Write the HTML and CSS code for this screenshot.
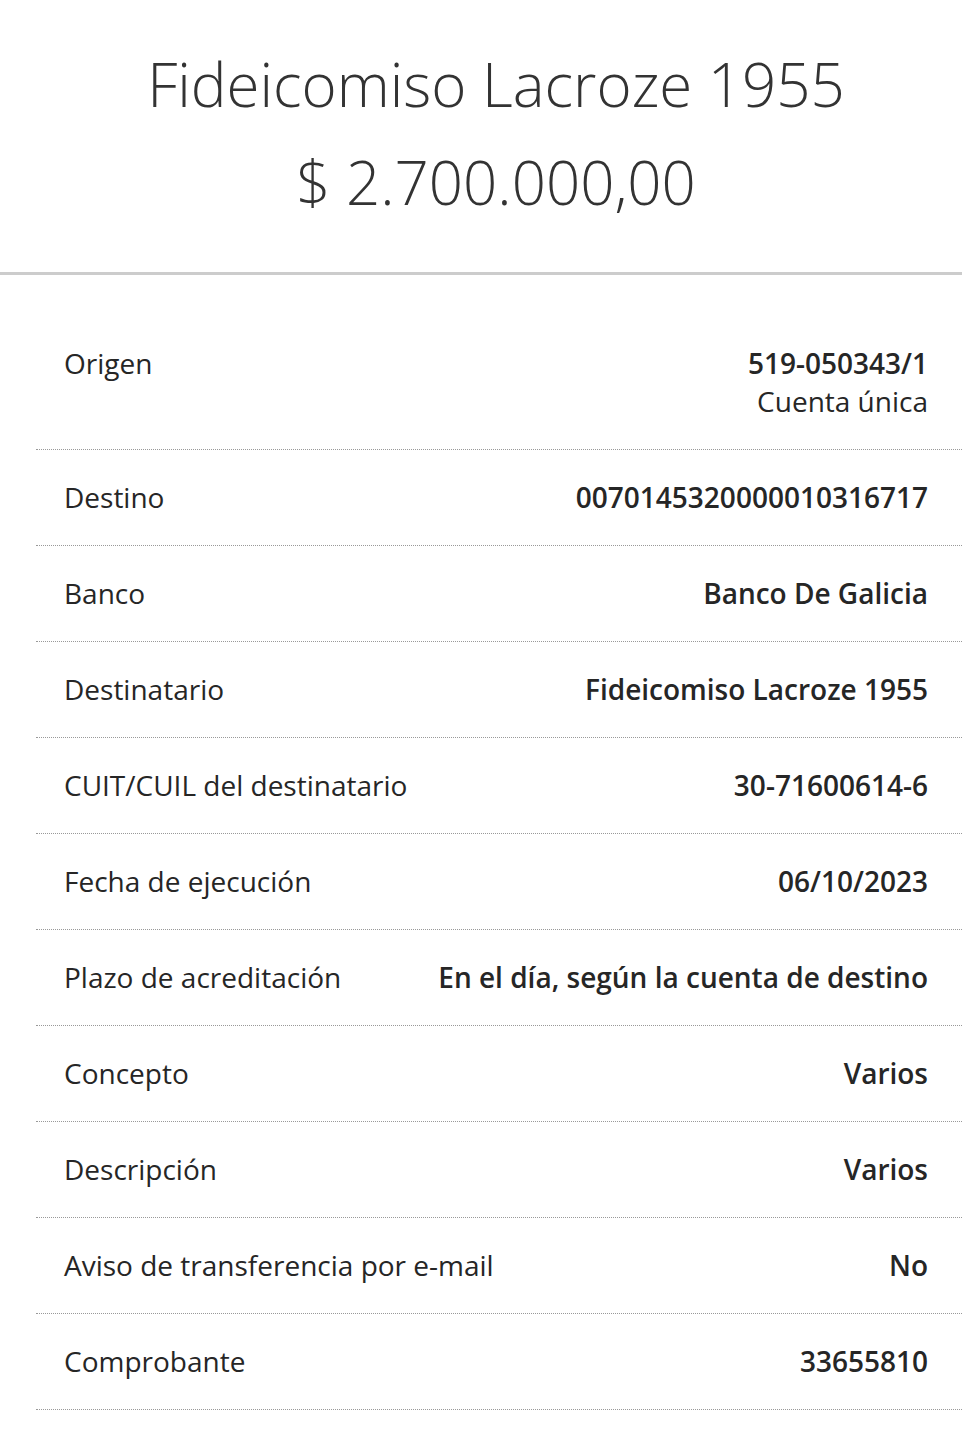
FILE: index.html
```html
<!DOCTYPE html>
<html lang="es">
<head>
    <meta charset="UTF-8">
    <meta name="viewport" content="width=device-width, initial-scale=1.0">
    <title>Comprobante de transferencia</title>
    <link rel="stylesheet" href="styles.css">
</head>
<body>
    <div class="page">
        <div class="header">
            <div class="title">Fideicomiso Lacroze 1955</div>
            <div class="amount">$ 2.700.000,00</div>
        </div>
        <div class="details">
            <div class="row">
                <div class="label">Origen</div>
                <div class="value">519-050343/1<span class="sub">Cuenta única</span></div>
            </div>
            <div class="row">
                <div class="label">Destino</div>
                <div class="value">0070145320000010316717</div>
            </div>
            <div class="row">
                <div class="label">Banco</div>
                <div class="value">Banco De Galicia</div>
            </div>
            <div class="row">
                <div class="label">Destinatario</div>
                <div class="value">Fideicomiso Lacroze 1955</div>
            </div>
            <div class="row">
                <div class="label">CUIT/CUIL del destinatario</div>
                <div class="value">30-71600614-6</div>
            </div>
            <div class="row">
                <div class="label">Fecha de ejecución</div>
                <div class="value">06/10/2023</div>
            </div>
            <div class="row">
                <div class="label">Plazo de acreditación</div>
                <div class="value">En el día, según la cuenta de destino</div>
            </div>
            <div class="row">
                <div class="label">Concepto</div>
                <div class="value">Varios</div>
            </div>
            <div class="row">
                <div class="label">Descripción</div>
                <div class="value">Varios</div>
            </div>
            <div class="row">
                <div class="label">Aviso de transferencia por e-mail</div>
                <div class="value">No</div>
            </div>
            <div class="row">
                <div class="label">Comprobante</div>
                <div class="value">33655810</div>
            </div>
        </div>
    </div>
</body>
</html>
```

FILE: styles.css
```css
html, body {
    overflow-x: hidden;
}
body {
    margin: 0;
    font-family: "Open Sans", Arial, sans-serif;
    color: #262626;
    background: #fff;
}
.page {
    width: 992px;
}
.header {
    padding: 35px 0 41px;
    text-align: center;
    border-bottom: 3px solid #cccccc;
    color: #333;
    font-weight: 300;
    font-size: 60px;
    line-height: 98px;
}
.details {
    margin: 41px 0 0 36px;
}
.row {
    display: flex;
    justify-content: space-between;
    align-items: flex-start;
    padding: 28px 64px 29px 28px;
    border-bottom: 1px dotted #999;
    font-size: 28px;
    line-height: 38px;
}
.value {
    font-weight: 600;
    text-align: right;
}
.sub {
    display: block;
    font-weight: 400;
}
```
